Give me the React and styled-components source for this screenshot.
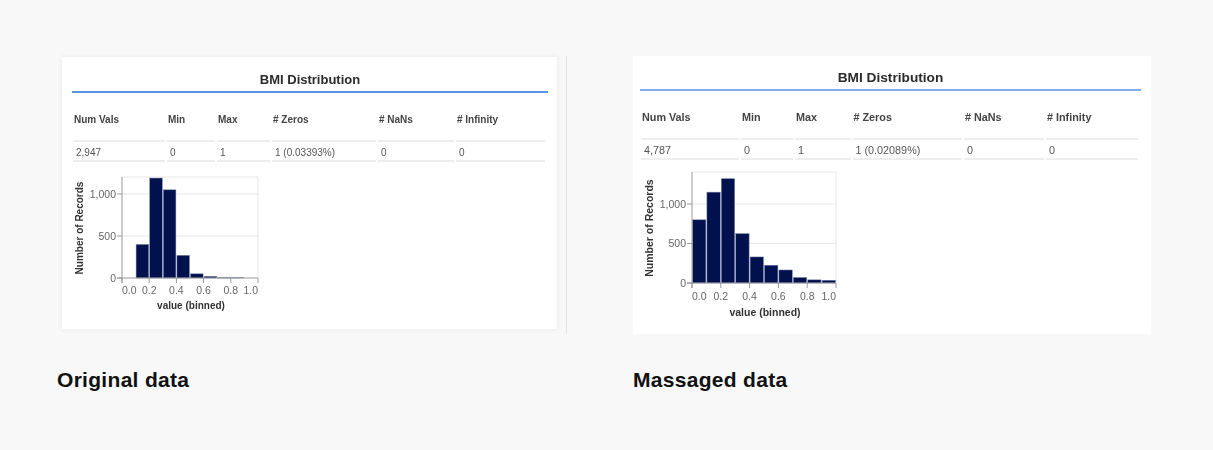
import React from 'react';
import styled, { createGlobalStyle } from 'styled-components';

const GlobalStyle = createGlobalStyle`
  html, body {
    margin: 0;
    background: #f8f8f8;
  }
`;

const Page = styled.div`
  width: 1213px;
  height: 450px;
  overflow: hidden;
  display: flex;
  align-items: flex-start;
  padding: 56px 0 0 57px;
  box-sizing: border-box;
  background: #f8f8f8;
  font-family: "Liberation Sans", Arial, sans-serif;
`;

const Section = styled.section`
  width: ${p => p.$width}px;
  flex: none;
`;

const Divider = styled.div`
  width: 1px;
  height: 278px;
  flex: none;
  margin-right: 66px;
  background: #e6e6e6;
`;

const Card = styled.div`
  width: ${p => p.$width}px;
  height: ${p => p.$height}px;
  margin: ${p => p.$margin};
  padding: ${p => p.$padding};
  box-sizing: border-box;
  background: #fff;
  box-shadow: ${p => (p.$shadow ? '0 0 5px rgba(0, 0, 0, 0.08)' : 'none')};
`;

const Blurred = styled.div`
  filter: blur(0.45px);
`;

const Title = styled.h2`
  margin: 0;
  height: ${p => p.$height}px;
  line-height: ${p => p.$lineHeight}px;
  text-align: center;
  font-size: ${p => p.$size}px;
  font-weight: 700;
  color: #2b2b2b;
  border-bottom: ${p => p.$rule}px solid ${p => p.$color};
`;

const Stats = styled.div`
  display: grid;
  grid-template-columns: ${p => p.$cols};
  padding-left: 1px;
`;

const HeadCell = styled.div`
  height: ${p => p.$height}px;
  padding: 0 0 ${p => p.$bottom}px 1px;
  box-sizing: border-box;
  display: flex;
  align-items: flex-end;
  font-size: ${p => p.$size}px;
  line-height: 12px;
  font-weight: 700;
  color: #444;
`;

const ValueCell = styled.div`
  height: 22px;
  margin-right: 2px;
  padding: ${p => p.$top}px 0 0 3px;
  box-sizing: border-box;
  display: flex;
  align-items: center;
  font-size: ${p => p.$size}px;
  color: #555;
  border-top: 2px solid #eeeeee;
  border-bottom: 2px solid #eeeeee;
`;

const ChartWrap = styled.div`
  margin-top: ${p => p.$top}px;
`;

const Caption = styled.h3`
  margin: ${p => p.$top}px 0 0;
  font-size: 21px;
  line-height: 22px;
  font-weight: 700;
  letter-spacing: 0.3px;
  color: #111;
`;

const AxisLabel = styled.text`
  font-family: "Liberation Sans", Arial, sans-serif;
  font-size: 10.5px;
  fill: #666;
`;

const AxisTitle = styled.text`
  font-family: "Liberation Sans", Arial, sans-serif;
  font-size: ${p => p.$size}px;
  font-weight: 700;
  fill: #333;
`;

const Histogram = ({ width, height, left, right, top, bottom, per500, values, labelY, titleSize, titleY, titleX, yTitleX, yTitleY }) => {
    const bin = (right - left) / 10;
    const yFor = v => bottom - (v / 500) * per500;

    return (
        <svg width={width} height={height} style={{ display: 'block' }}>
            {[500, 1000].map(v => (
                <line key={v} x1={left} x2={right} y1={yFor(v)} y2={yFor(v)} stroke="#e6e6e6" />
            ))}
            <line x1={right} x2={right} y1={top} y2={bottom} stroke="#e6e6e6" />
            <line x1={left} x2={right} y1={top} y2={top} stroke="#e6e6e6" />
            {values.map((v, i) => (
                <rect
                    key={i}
                    x={left + i * bin + 0.5}
                    y={yFor(v)}
                    width={bin - 1}
                    height={bottom - yFor(v)}
                    fill="#00114d"
                    stroke="#7f8bb0"
                    strokeWidth="0.5"
                />
            ))}
            <line x1={left} x2={left} y1={top} y2={bottom + 5} stroke="#999" />
            <line x1={left - 5} x2={right} y1={bottom} y2={bottom} stroke="#999" />
            {[0, 500, 1000].map(v => (
                <g key={v}>
                    <line x1={left - 5} x2={left} y1={yFor(v)} y2={yFor(v)} stroke="#999" />
                    <AxisLabel x={left - 6} y={yFor(v) + 3.5} textAnchor="end">{v === 1000 ? '1,000' : v}</AxisLabel>
                </g>
            ))}
            {[0, 2, 4, 6, 8, 10].map(i => {
                const x = left + i * bin;
                const anchor = i === 0 ? 'start' : i === 10 ? 'end' : 'middle';
                return (
                    <g key={i}>
                        <line x1={x} x2={x} y1={bottom} y2={bottom + 5} stroke="#999" />
                        <AxisLabel x={x} y={labelY} textAnchor={anchor}>{(i / 10).toFixed(1)}</AxisLabel>
                    </g>
                );
            })}
            <AxisTitle $size={titleSize} x={titleX} y={titleY} textAnchor="middle">value (binned)</AxisTitle>
            <AxisTitle
                $size={titleSize}
                x={yTitleX}
                y={yTitleY}
                textAnchor="middle"
                transform={`rotate(-90 ${yTitleX} ${yTitleY})`}
            >
                Number of Records
            </AxisTitle>
        </svg>
    );
};

const HEADERS = ['Num Vals', 'Min', 'Max', '# Zeros', '# NaNs', '# Infinity'];

const StatsTable = ({ cols, size, headHeight, headBottom, valueTop, values }) => (
    <Stats $cols={cols}>
        {HEADERS.map(h => <HeadCell key={h} $height={headHeight} $bottom={headBottom} $size={size}>{h}</HeadCell>)}
        {values.map((v, i) => <ValueCell key={i} $top={valueTop} $size={size}>{v}</ValueCell>)}
    </Stats>
);

const App = () => (
    <Page>
        <GlobalStyle />
        <Section $width={509}>
            <Card $width={495} $height={272} $margin="1px 0 0 5px" $padding="0 9px 0 10px" $shadow>
                <Blurred>
                    <Title $height={34} $lineHeight={46} $size={13} $rule={2} $color="#5b92ea">BMI Distribution</Title>
                    <StatsTable
                        cols="94px 50px 55px 106px 78px 91px"
                        size={10}
                        headHeight={47}
                        headBottom={14}
                        valueTop={2}
                        values={['2,947', '0', '1', '1 (0.03393%)', '0', '0']}
                    />
                    <ChartWrap $top={9}>
                        <Histogram
                            width={200}
                            height={150}
                            left={50}
                            right={186}
                            top={6}
                            bottom={107}
                            per500={42}
                            values={[0, 400, 1190, 1050, 270, 50, 20, 6, 3, 0]}
                            labelY={123}
                            titleSize={10}
                            titleX={119}
                            titleY={138}
                            yTitleX={11}
                            yTitleY={57}
                        />
                    </ChartWrap>
                </Blurred>
            </Card>
            <Caption $top={40}>Original data</Caption>
        </Section>
        <Divider />
        <Section $width={518}>
            <Card $width={518} $height={278} $margin="0" $padding="0 10px 0 7px">
                <Blurred>
                    <Title $height={33} $lineHeight={43} $size={13.7} $rule={2.5} $color="#7fadf4">BMI Distribution</Title>
                    <StatsTable
                        cols="100px 54px 57.5px 111.5px 82px 94px"
                        size={10.8}
                        headHeight={47}
                        headBottom={15}
                        valueTop={1}
                        values={['4,787', '0', '1', '1 (0.02089%)', '0', '0']}
                    />
                    <ChartWrap $top={11}>
                        <Histogram
                            width={205}
                            height={155}
                            left={52}
                            right={196}
                            top={1}
                            bottom={112}
                            per500={39.5}
                            values={[800, 1150, 1320, 625, 330, 225, 165, 70, 40, 35]}
                            labelY={129}
                            titleSize={10.5}
                            titleX={125}
                            titleY={145}
                            yTitleX={13}
                            yTitleY={57}
                        />
                    </ChartWrap>
                </Blurred>
            </Card>
            <Caption $top={35}>Massaged data</Caption>
        </Section>
    </Page>
);

export default App;
